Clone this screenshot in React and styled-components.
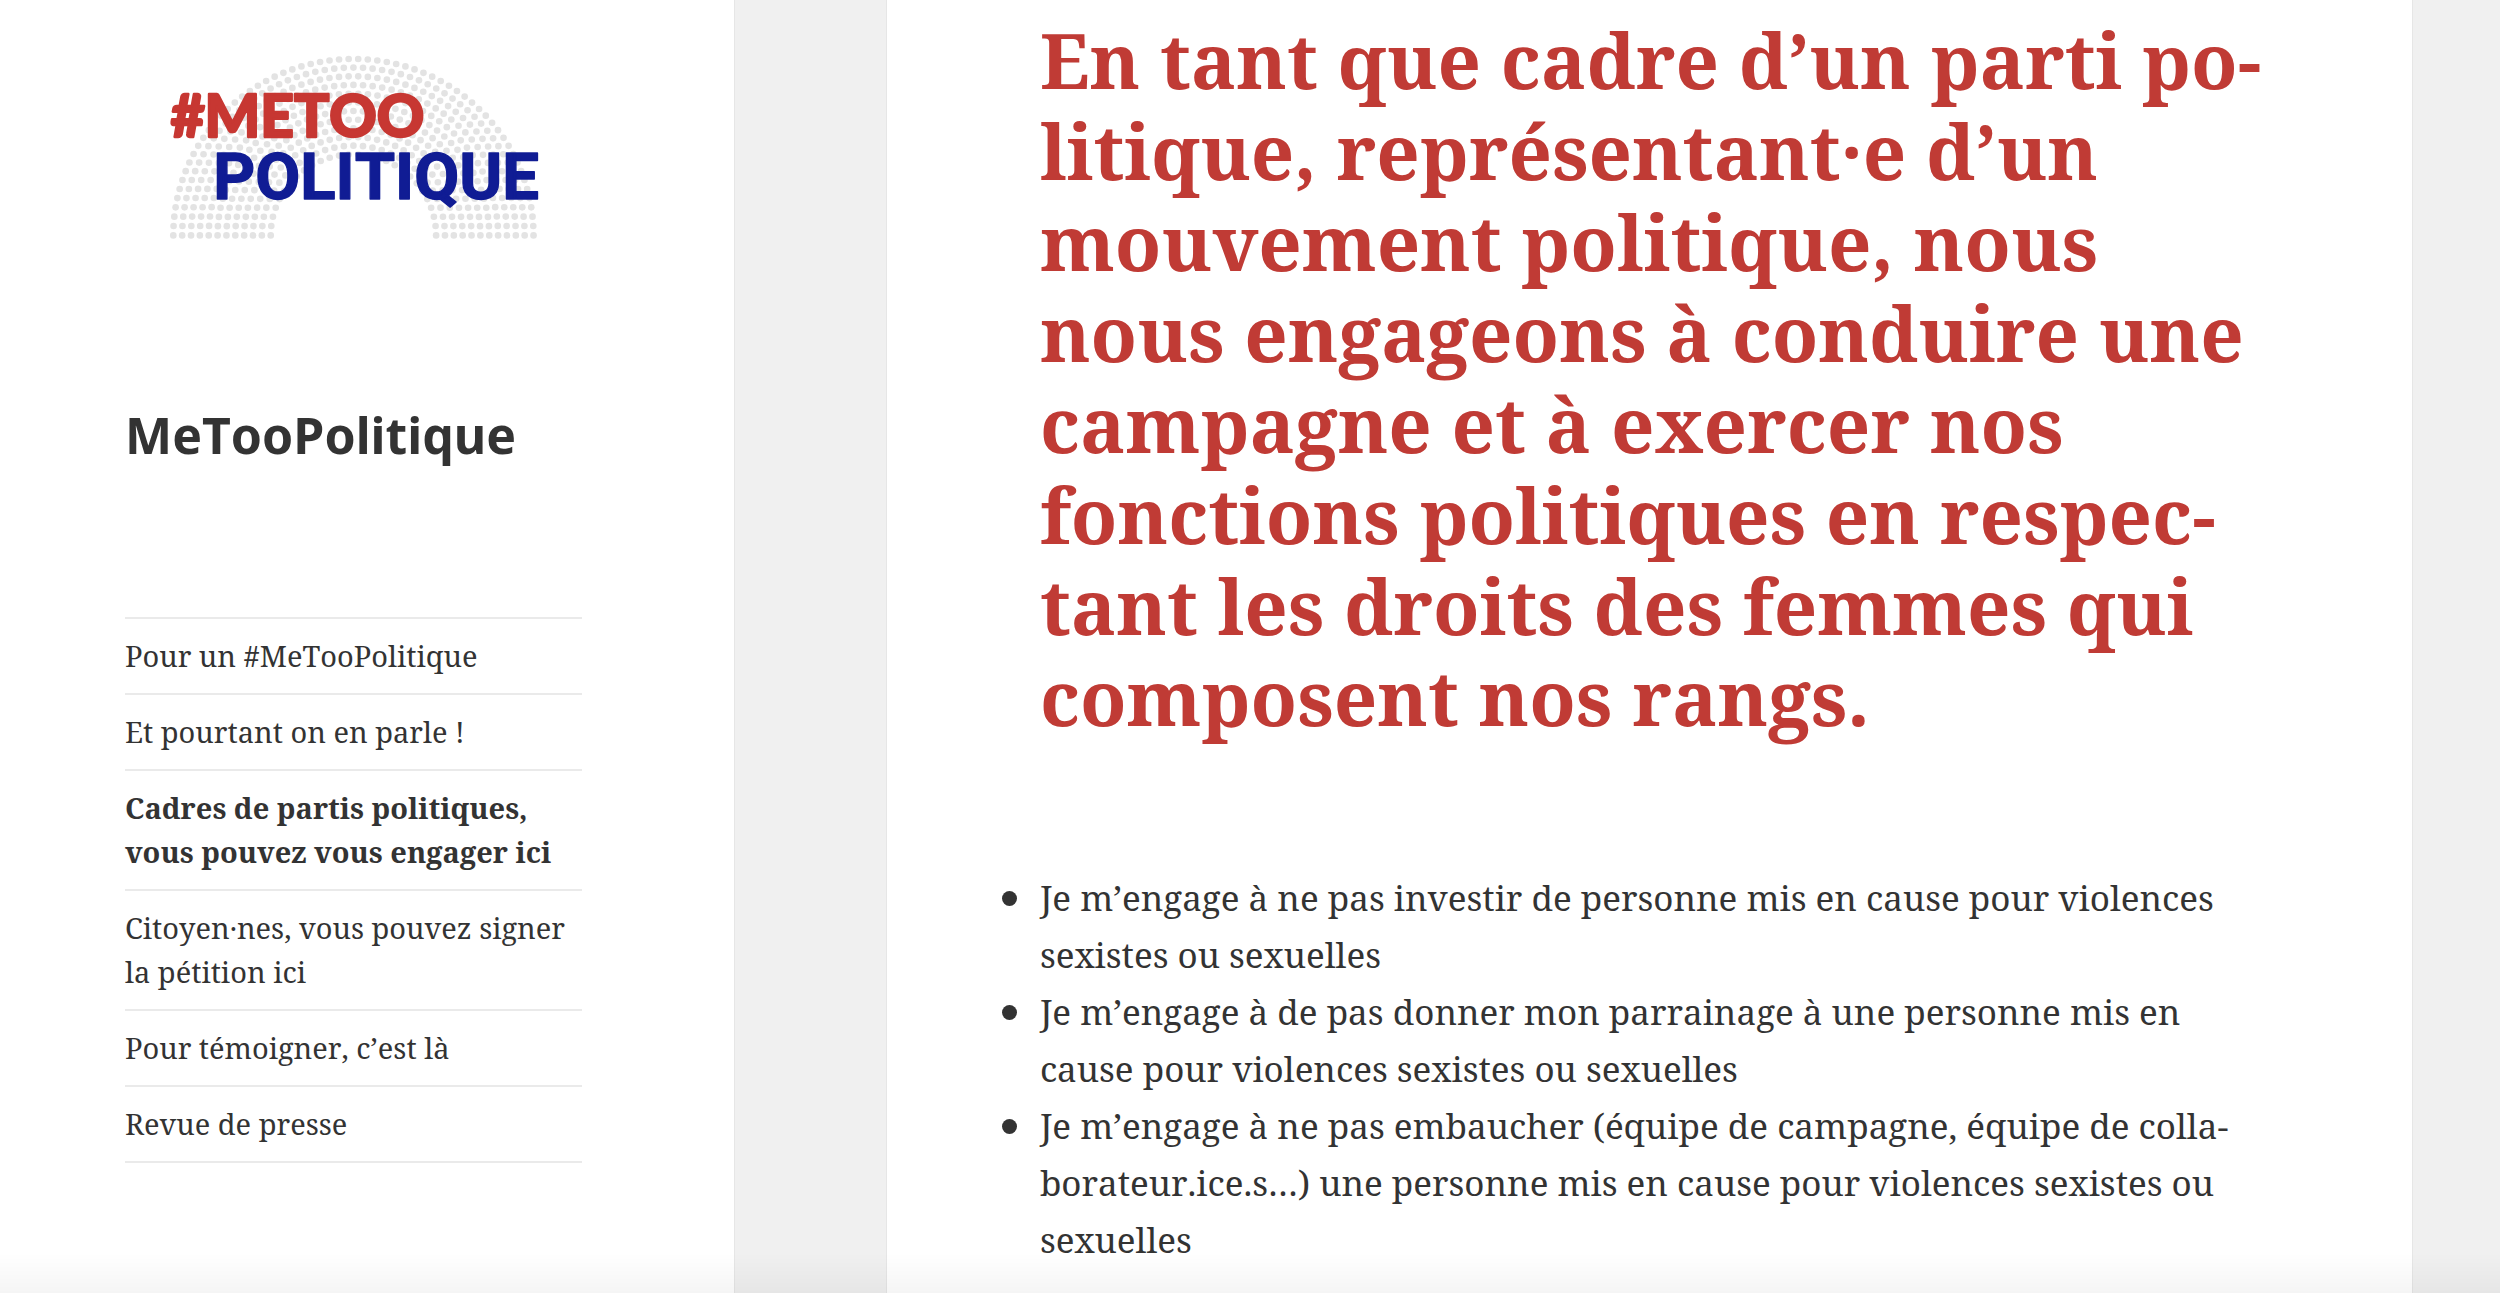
import styled, { createGlobalStyle } from "styled-components";

const serif = `"Noto Serif", "DejaVu Serif", serif`;
const sans = `"Noto Sans", "Open Sans", sans-serif`;

const GlobalStyle = createGlobalStyle`
  * {
    box-sizing: border-box;
  }

  body {
    margin: 0;

    background: #f0f0f0;

    color: #333333;

    font-family: ${serif};
    font-kerning: none;
  }
`;

const Page = styled.div`
  display: flex;

  min-height: 100vh;

  overflow: hidden;
`;

const Sidebar = styled.aside`
  flex: 0 0 29.4%;

  padding: 40px 6.1% 0 5%;

  background: #ffffff;

  border-right: 1px solid #e6e6e6;
`;

const LogoLink = styled.a`
  display: block;

  padding: 0 22px 0 25px;
`;

const LogoSvg = styled.svg`
  display: block;

  width: 100%;
`;

const SiteTitle = styled.h1`
  margin: 145px 0 0;

  font-family: ${sans};
  font-size: 50px;
  font-weight: 700;
  line-height: 70px;
`;

const SiteLink = styled.a`
  color: inherit;

  text-decoration: none;
`;

const Menu = styled.ul`
  margin: 147px 0 0;

  padding: 0;

  border-top: 2px solid #eaeaea;

  list-style: none;
`;

const MenuItem = styled.li`
  border-bottom: 2px solid #eaeaea;
`;

const MenuLink = styled.a`
  display: block;

  padding: 15px 0;

  color: inherit;

  font-size: 29px;
  font-weight: ${({ $current }) => ($current ? 700 : 400)};
  line-height: 44px;

  text-decoration: none;
`;

const Main = styled.main`
  flex: 1;

  display: flex;

  padding: 0 3.5% 0 6.05%;
`;

const Article = styled.article`
  flex: 1;

  padding: 14px 9.5% 0 10%;

  background: #ffffff;

  border: solid #e6e6e6;
  border-width: 0 1px;
`;

const Pledge = styled.h2`
  margin: 0;

  color: #c03b35;

  font-size: 76px;
  font-weight: 700;
  line-height: 91px;
`;

const Commitments = styled.ul`
  margin: 127px 0 0;

  padding: 0;

  font-size: 35px;
  line-height: 57px;

  list-style: none;
`;

const Commitment = styled.li`
  &::before {
    content: "";

    display: inline-block;

    width: 15px;
    height: 15px;

    margin: 0 23px 0 -38px;

    background: currentColor;

    border-radius: 50%;

    vertical-align: 5px;
  }
`;

const BottomShade = styled.div`
  position: fixed;
  right: 0;
  bottom: 0;
  left: 0;

  height: 40px;

  background: linear-gradient(rgba(0, 0, 0, 0), rgba(0, 0, 0, 0.04));

  pointer-events: none;
`;

const menu = [
  { label: "Pour un #MeTooPolitique" },
  { label: "Et pourtant on en parle !" },
  {
    label: "Cadres de partis politiques, vous pouvez vous engager ici",
    current: true,
  },
  { label: "Citoyen·nes, vous pouvez signer la pétition ici" },
  { label: "Pour témoigner, c’est là" },
  { label: "Revue de presse" },
];

const commitments = [
  "Je m’engage à ne pas investir de personne mis en cause pour violences sexistes ou sexuelles",
  "Je m’engage à de pas donner mon parrainage à une personne mis en cause pour violences sexistes ou sexuelles",
  "Je m’engage à ne pas embaucher (équipe de campagne, équipe de colla\u00adborateur.ice.s…) une personne mis en cause pour violences sexistes ou sexuelles",
];

// Seats of the assembly: twelve half rings of dots
const seats = [];
for (let ring = 0; ring < 12; ring += 1) {
  const radius = 541 - ring * 26.6;
  const gaps = Math.round((Math.PI * radius) / 28.8);
  for (let i = 0; i <= gaps; i += 1) {
    const angle = (Math.PI * i) / gaps;
    seats.push({
      x: 611 - radius * Math.cos(angle),
      y: 587 - radius * 0.98 * Math.sin(angle),
    });
  }
}

function Logo() {
  return (
    <LogoSvg viewBox="0 0 1230 645" role="img" aria-label="#MeToo Politique">
      <g fill="#e3e3e3">
        {seats.map(({ x, y }) => (
          <circle key={`${x}-${y}`} cx={x} cy={y} r="10" />
        ))}
      </g>
      <text strokeLinejoin="round">
        <tspan
          x="62"
          y="292"
          fill="#c73732"
          stroke="#c73732"
          strokeWidth="7"
          fontFamily="Lato, sans-serif"
          fontWeight="900"
          fontSize="176"
        >
          #METOO
        </tspan>
        <tspan
          x="190"
          y="477"
          fill="#101c94"
          stroke="#101c94"
          strokeWidth="4"
          fontFamily="Roboto, sans-serif"
          fontWeight="700"
          fontSize="196"
        >
          POLITIQUE
        </tspan>
      </text>
    </LogoSvg>
  );
}

export default function App() {
  return (
    <>
      <GlobalStyle />
      <Page lang="fr">
        <Sidebar>
          <LogoLink href="#accueil">
            <Logo />
          </LogoLink>
          <SiteTitle>
            <SiteLink href="#accueil">MeTooPolitique</SiteLink>
          </SiteTitle>
          <nav>
            <Menu>
              {menu.map(({ label, current }) => (
                <MenuItem key={label}>
                  <MenuLink
                    href="#page"
                    $current={current}
                    aria-current={current ? "page" : undefined}
                  >
                    {label}
                  </MenuLink>
                </MenuItem>
              ))}
            </Menu>
          </nav>
        </Sidebar>
        <Main>
          <Article>
            <Pledge>
              En tant que cadre d’un parti po&shy;litique, représentant·e d’un
              mouvement politique, nous nous engageons à conduire une campagne
              et à exercer nos fonctions politiques en respec&shy;tant les
              droits des femmes qui composent nos rangs.
            </Pledge>
            <Commitments>
              {commitments.map((text) => (
                <Commitment key={text}>{text}</Commitment>
              ))}
            </Commitments>
          </Article>
        </Main>
      </Page>
      <BottomShade />
    </>
  );
}
